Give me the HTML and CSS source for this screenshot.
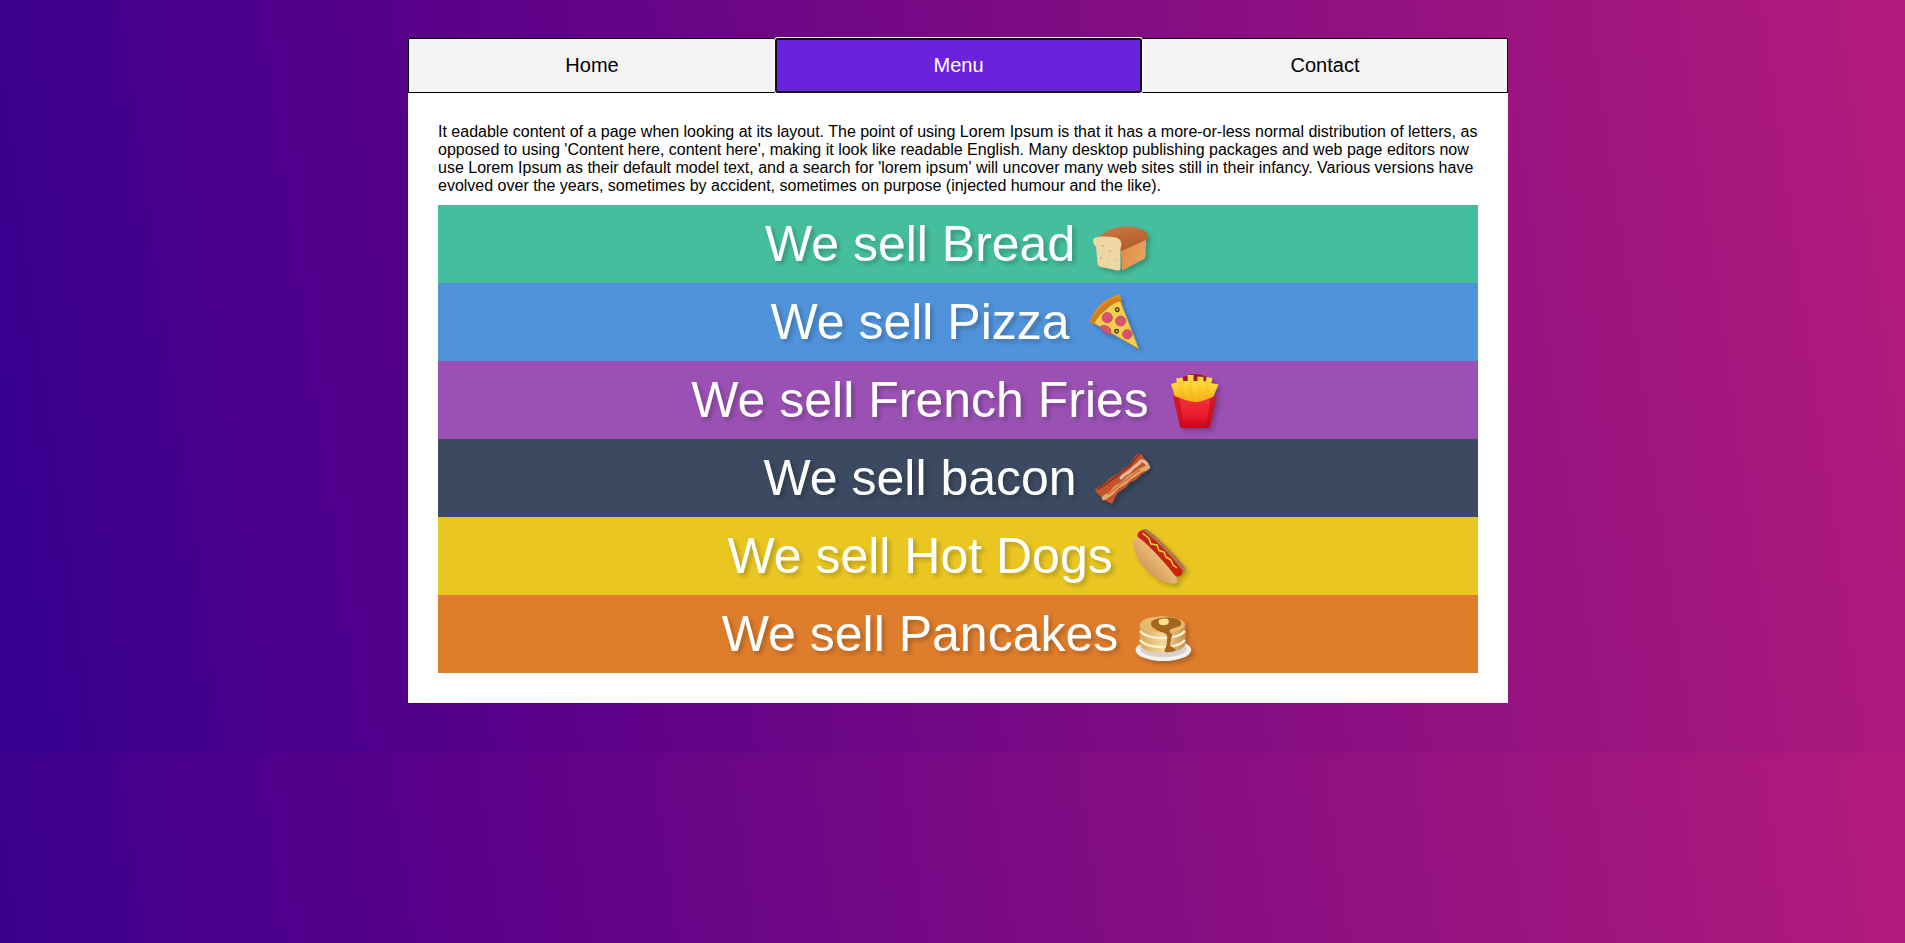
FILE: index.html
```html
<!DOCTYPE html>
<html lang="en">
<head>
<meta charset="utf-8">
<title>We sell food</title>
<link rel="stylesheet" href="styles.css">
</head>
<body>
<main class="card">
  <nav class="tabs">
    <a class="tab tab-home" href="#home">Home</a>
    <a class="tab tab-active" href="#menu">Menu</a>
    <a class="tab" href="#contact">Contact</a>
  </nav>
  <section class="content">
    <p class="intro">It eadable content of a page when looking at its layout. The point of using Lorem Ipsum is that it has a more-or-less normal distribution of letters, as opposed to using 'Content here, content here', making it look like readable English. Many desktop publishing packages and web page editors now use Lorem Ipsum as their default model text, and a search for 'lorem ipsum' will uncover many web sites still in their infancy. Various versions have evolved over the years, sometimes by accident, sometimes on purpose (injected humour and the like).</p>

    <div class="row row-bread">
      <span>We sell Bread</span>
      <svg class="emoji" viewBox="0 0 62 62" role="img" aria-label="bread">
        <defs>
          <linearGradient id="breadTop" x1="0.3" y1="0" x2="0.6" y2="1"><stop offset="0" stop-color="#cf7440"/><stop offset="1" stop-color="#a65a26"/></linearGradient>
          <linearGradient id="breadSide" x1="0" y1="0" x2="1" y2="0.6"><stop offset="0" stop-color="#d98a48"/><stop offset="1" stop-color="#eaa35c"/></linearGradient>
        </defs>
        <path fill="url(#breadTop)" d="M9 24C15 20 22 15 31 14C41 13 53 14 58 20C60 24 59 27 56 29L33 40L12 32Z"/>
        <path fill="url(#breadSide)" d="M32 38L57 27L56.500 43C56.500 45 55 46 53 47L33 57.500Z"/>
        <path fill="#edd7a4" d="M4.500 26C6 24 10 23.500 15 23.500C22 23.500 29 24 31 27C33 30 32.500 33 31.500 35L31.500 55C31.500 57.500 30 58 27 57.300L12 54C9.500 53.400 8.500 52 8.500 50L7 34C4.500 32 3.500 28 4.500 26Z"/>
        <g fill="#d4b682"><circle cx="14" cy="33" r="1"/><circle cx="21" cy="38" r="1.100"/><circle cx="25" cy="31" r=".7"/><circle cx="12" cy="45" r="1.300"/><circle cx="19" cy="48" r=".8"/><circle cx="26" cy="47" r=".8"/></g>
      </svg>
    </div>

    <div class="row row-pizza">
      <span>We sell Pizza</span>
      <svg class="emoji" viewBox="0 0 62 62" role="img" aria-label="pizza">
        <path fill="#f4cf4b" stroke="#d9a62a" stroke-width=".8" d="M8 31L35 7L54.500 57.500Z"/>
        <path fill="#e58e1f" d="M6 31C9 18 21 7 35 3.500C36.500 4 37 7 37.500 10C25 13 16 21 10 33.500C8.500 33 7 32 6 31Z"/>
        <path fill="#c76f12" d="M6 31C7 29 8.500 26 10.500 24C14 17 24 9 35 6L37.500 10C25 13 16 21 10 33.500C8.500 33 7 32 6 31Z" opacity=".5"/>
        <g fill="#d9536f" stroke="#c2405f" stroke-width=".8">
          <circle cx="23.300" cy="26.700" r="5.100"/>
          <circle cx="36.600" cy="30" r="5"/>
          <path d="M15.500 36.500C18 33.500 23 33.800 25.700 37C27.500 40 26.500 43 25.500 44.500Z"/>
          <circle cx="43.300" cy="43.300" r="4.700"/>
        </g>
        <g fill="none" stroke="#33302a" stroke-width="1.300"><circle cx="33.300" cy="18.700" r="1.800"/><circle cx="32.600" cy="40.300" r="1.800"/></g>
      </svg>
    </div>

    <div class="row row-fries">
      <span>We sell French Fries</span>
      <svg class="emoji" viewBox="0 0 62 62" role="img" aria-label="french fries">
        <defs>
          <linearGradient id="friesBox" x1="0" y1="0" x2="0" y2="1"><stop offset="0" stop-color="#f5333f"/><stop offset=".6" stop-color="#ea1c2c"/><stop offset="1" stop-color="#c70018"/></linearGradient>
          <linearGradient id="friesGold" x1="0" y1="0" x2="0" y2="1"><stop offset="0" stop-color="#ffe03c"/><stop offset="1" stop-color="#f2ad18"/></linearGradient>
        </defs>
        <ellipse cx="32" cy="20" rx="20" ry="15" fill="#a81524"/>
        <g fill="url(#friesGold)">
          <path d="M8 15L15 13L19 31L13 31Z"/>
          <path d="M13 9.500L19.500 8.500L24 32L18 32Z"/>
          <path d="M20 12L26 12L28 34L22 34Z"/>
          <path d="M24.500 6L30.500 6L31 34L26 34Z"/>
          <path d="M30 12L35 12L35 35L30 35Z"/>
          <path d="M34.500 7.500L40.500 8L39 34L34 34Z"/>
          <path d="M39.500 12L45 12.500L42 33L37 33Z"/>
          <path d="M43.500 8L49.500 9L45 32L40 32Z"/>
          <path d="M48 14L55.500 15.500L49 31L44 31Z"/>
        </g>
        <path fill="url(#friesBox)" d="M10 27C17 28.500 25 33 32.500 33C40 33 47 28.500 54 27L47 57C46.800 58.300 46 59 44.500 59L19.500 59C18 59 17.200 58.300 17 57Z"/>
        <path fill="#c4101f" opacity=".75" d="M10 27C12 27.400 14.500 28.200 16.500 29L21 59L19.500 59C18 59 17.200 58.300 17 57ZM54 27C52 27.400 49.500 28.200 47.500 29L43 59L44.500 59C46 59 46.800 58.300 47 57Z"/>
      </svg>
    </div>

    <div class="row row-bacon">
      <span>We sell bacon</span>
      <svg class="emoji" viewBox="0 0 62 62" role="img" aria-label="bacon">
        <path fill="#c4522a" d="M4 43C9 37 12 39 17 33C21 28 25 30 30 24C34 19 38 20 41 14C43 10 45 7 48 6.500C51 7 52 10 54 12C56 14 58 17 59 21C56 26 52 25 48 30C44 35 40 33 36 39C32 44 28 43 25 49C23 53 22 56 21 56.500C17 56 13 52 9 49C7 47 5 45 4 43Z"/>
        <path fill="none" stroke="#dba96f" stroke-width="4.500" stroke-linecap="round" d="M13 51C18 47 20 48 24 42C28 37 32 38 36 33C40 28 43 29 47 25C50 22 53 23 57 20"/>
        <path fill="none" stroke="#d96a3a" stroke-width="1.600" stroke-linecap="round" d="M17 47C21 44 23 44 27 39C31 34 35 35 39 30C43 26 45 26 49 23"/>
        <path fill="none" stroke="#e8b8a0" stroke-width="3" stroke-linecap="round" d="M30 31C34 26 37 27 41 22C44 19 47 18 50 14C52 13 54 15 56 17"/>
        <path fill="none" stroke="#8f3218" stroke-width="1.800" stroke-linecap="round" d="M7 42C12 37 15 39 19 34C23 30 26 31 31 25C35 20 39 21 42 15C44 12 46 9 48 8"/>
      </svg>
    </div>

    <div class="row row-hotdog">
      <span>We sell Hot Dogs</span>
      <svg class="emoji" viewBox="0 0 62 62" role="img" aria-label="hot dog">
        <defs>
          <linearGradient id="hotdogBun" x1="0" y1="1" x2="1" y2="0"><stop offset="0" stop-color="#b9793a"/><stop offset=".55" stop-color="#e9b878"/><stop offset="1" stop-color="#cf9455"/></linearGradient>
        </defs>
        <path fill="none" stroke="#b0784a" stroke-width="10" stroke-linecap="round" d="M18 9C28 17 44 33 53 44"/>
        <path fill="none" stroke="#c9220f" stroke-width="9" stroke-linecap="round" d="M15 10C26 19 42 35 51 47"/>
        <path fill="url(#hotdogBun)" d="M6.500 18C7 13 10 12 13 13.500C23 21 38 38 49 52C51 55 51 57.500 48.500 58.500C41 59.500 32 56 25 50C16 43 7 30 6.500 18Z"/>
        <path fill="none" stroke="#ffe01e" stroke-width="1.500" stroke-linejoin="round" d="M15.500 8L22 13.500L24 19L30 20L32 25.500L37 27L39 32L44 35L46 40L50 43"/>
      </svg>
    </div>

    <div class="row row-pancakes">
      <span>We sell Pancakes</span>
      <svg class="emoji" viewBox="0 0 62 62" role="img" aria-label="pancakes">
        <defs>
          <linearGradient id="cakeSide" x1="0" y1="0" x2="1" y2="0"><stop offset="0" stop-color="#d8a458"/><stop offset=".5" stop-color="#f3d79a"/><stop offset="1" stop-color="#c8934a"/></linearGradient>
        </defs>
        <ellipse cx="31.400" cy="47" rx="27.800" ry="11" fill="#f4f2f0"/>
        <ellipse cx="31.400" cy="46" rx="23.500" ry="8" fill="#d6d2cf"/>
        <path fill="url(#cakeSide)" d="M7.500 23C7.500 17 18 13.500 30.500 13.500C43 13.500 53.500 17 53.500 23L53.500 40C53.500 46 43 50 30.500 50C18 50 7.500 46 7.500 40Z"/>
        <path fill="none" stroke="#fff3cf" stroke-width="2.300" d="M8 28C12 33 22 35 30.500 35C39 35 49 33 53 28"/>
        <path fill="none" stroke="#fff3cf" stroke-width="2.300" d="M8 37C12 42 22 44 30.500 44C39 44 49 42 53 37"/>
        <ellipse cx="30.500" cy="21.500" rx="22.500" ry="8" fill="#e6bb6e"/>
        <path fill="#a5651f" d="M20 18C24 15 34 13.800 42 15C48 16 50 19 49 22C46 25 41 24 38 27C36 29 41 30 40 33C39 35 39 38 38 41C37.500 44 42 44 44 47C42 49 36 49.500 33 49C32 46 35 43 35 40C35 36 36 33 34 31C31 29 27 29 23 26C19 24 18 20 20 18Z"/>
        <path fill="#fbe38a" d="M27 17C28 15.500 34 15 36 16C37 17 37 20 36 21C34 22.500 29 22.500 27.500 21.300C26.500 20 26.500 18 27 17Z"/>
      </svg>
    </div>
  </section>
</main>
</body>
</html>
```
FILE: styles.css
```css
html {
  background: linear-gradient(82deg, #360090 0%, #57008a 25%, #b31b7c 100%);
}
body {
  margin: 0;
  padding: 38px 0 50px 11px;
  font-family: "Liberation Sans", Arial, sans-serif;
}
.card {
  width: 1100px;
  margin: 0 auto;
  background: #fff;
}
.tabs {
  display: grid;
  grid-template-columns: 367px 367px 366px;
}
.tab {
  height: 55px;
  box-sizing: border-box;
  display: flex;
  align-items: center;
  justify-content: center;
  border: 1px solid #000;
  background: #f4f4f4;
  color: #000;
  font-size: 20px;
  text-decoration: none;
}
.tab-home {
  padding-left: 1px;
}
.tab-active {
  position: relative;
  z-index: 1;
  background: #6a22dd;
  color: #fff;
  border: 2px solid #101010;
  border-radius: 3px;
  box-shadow: 0 0 0 1px #fff;
}
.content {
  padding: 30px;
}
.intro {
  margin: 0 0 10px;
  font-size: 16px;
  color: #000;
}
.row {
  height: 78px;
  display: flex;
  align-items: center;
  justify-content: center;
  color: #fff;
  font-size: 50px;
  text-shadow: 3px 3px 4px rgba(0, 0, 0, 0.22);
}
.emoji {
  width: 62px;
  height: 62px;
  margin-left: 13.9px;
  filter: drop-shadow(3px 3px 2px rgba(0, 0, 0, 0.22));
}
.row-bread { background: #46be9d; }
.row-pizza { background: #5093db; }
.row-fries { background: #9b51b4; }
.row-bacon { background: #3b4a60; }
.row-hotdog { background: #e9c622; }
.row-pancakes { background: #de7d2c; }
```
